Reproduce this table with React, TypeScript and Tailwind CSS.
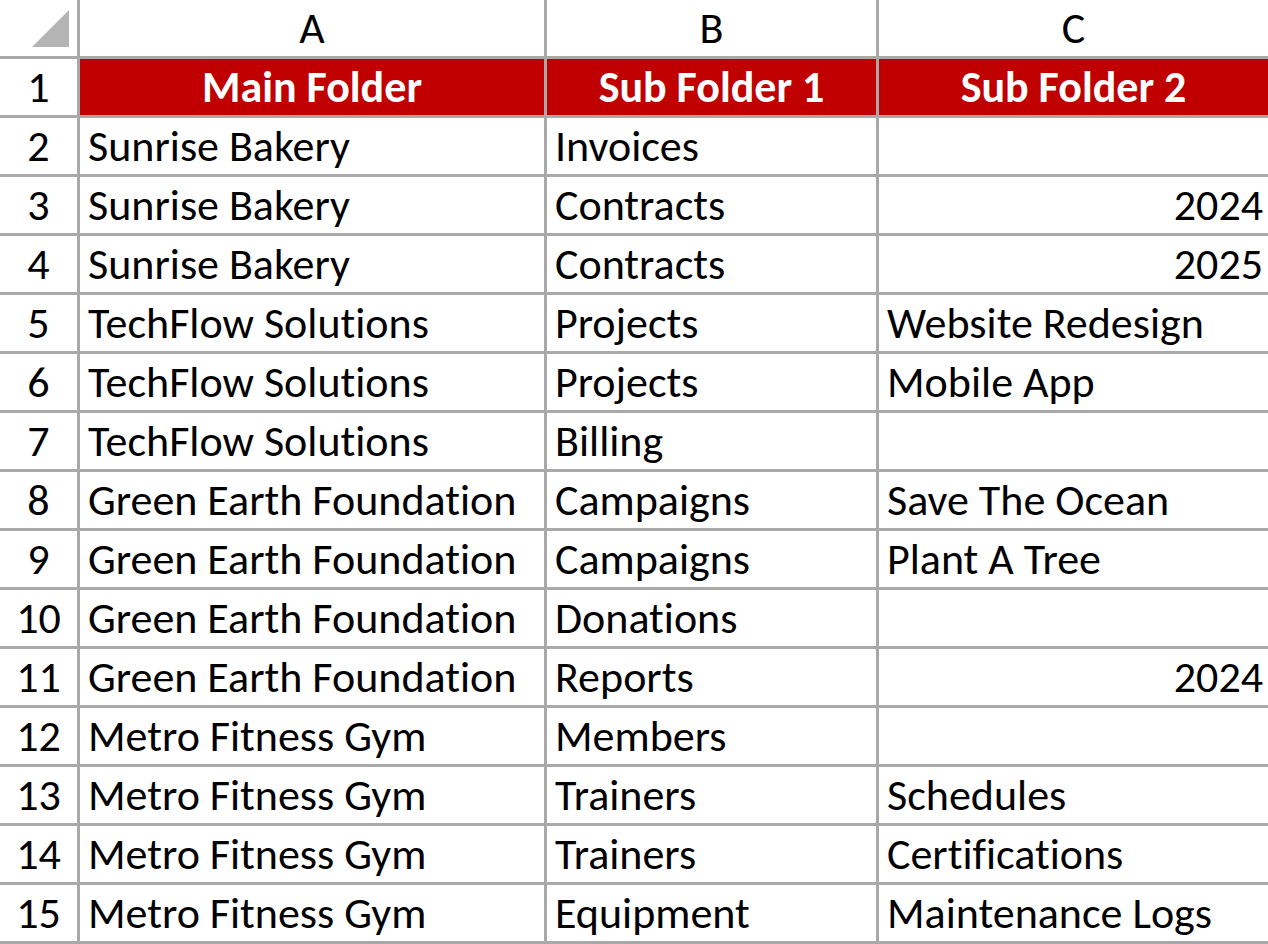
import React from "react";

const rows: [string, string, string][] = [
  ["Sunrise Bakery", "Invoices", ""],
  ["Sunrise Bakery", "Contracts", "2024"],
  ["Sunrise Bakery", "Contracts", "2025"],
  ["TechFlow Solutions", "Projects", "Website Redesign"],
  ["TechFlow Solutions", "Projects", "Mobile App"],
  ["TechFlow Solutions", "Billing", ""],
  ["Green Earth Foundation", "Campaigns", "Save The Ocean"],
  ["Green Earth Foundation", "Campaigns", "Plant A Tree"],
  ["Green Earth Foundation", "Donations", ""],
  ["Green Earth Foundation", "Reports", "2024"],
  ["Metro Fitness Gym", "Members", ""],
  ["Metro Fitness Gym", "Trainers", "Schedules"],
  ["Metro Fitness Gym", "Trainers", "Certifications"],
  ["Metro Fitness Gym", "Equipment", "Maintenance Logs"],
];

const isNum = (s: string) => /^\d+$/.test(s);

export default function App() {
  return (
    <div
      className="w-[1268px] h-[944px] overflow-hidden bg-white text-black [font-variant-ligatures:none]"
      style={{ fontFamily: "Carlito, Calibri, Lato, sans-serif" }}
    >
      <div className="grid grid-cols-[77px_464px_329px_389px] auto-rows-[56px] gap-[3px] bg-[#a9a9a9] pb-[3px] text-[44px] leading-none">
        {/* header row */}
        <div className="bg-white flex items-center justify-center">
          <svg width="77" height="56" viewBox="0 0 77 56">
            <polygon points="69,10 69,47 32,47" fill="#b4b4b4" />
          </svg>
        </div>
        {["A", "B", "C"].map((c) => (
          <div key={c} className="bg-white flex items-center justify-center">
            {c}
          </div>
        ))}
        {/* row 1 */}
        <div className="bg-white flex items-center justify-center">1</div>
        {["Main Folder", "Sub Folder 1", "Sub Folder 2"].map((h) => (
          <div
            key={h}
            className="bg-[#c00000] text-white font-bold flex items-center justify-center"
          >
            {h}
          </div>
        ))}
        {rows.map((r, i) => (
          <React.Fragment key={i}>
            <div className="bg-white flex items-center justify-center">{i + 2}</div>
            <div className="bg-white flex items-center pl-[8px] whitespace-nowrap">{r[0]}</div>
            <div className="bg-white flex items-center pl-[8px] whitespace-nowrap">{r[1]}</div>
            <div
              className={
                "bg-white flex items-center whitespace-nowrap " +
                (isNum(r[2]) ? "justify-end pr-[5px]" : "pl-[8px]")
              }
            >
              {r[2]}
            </div>
          </React.Fragment>
        ))}
      </div>
    </div>
  );
}
